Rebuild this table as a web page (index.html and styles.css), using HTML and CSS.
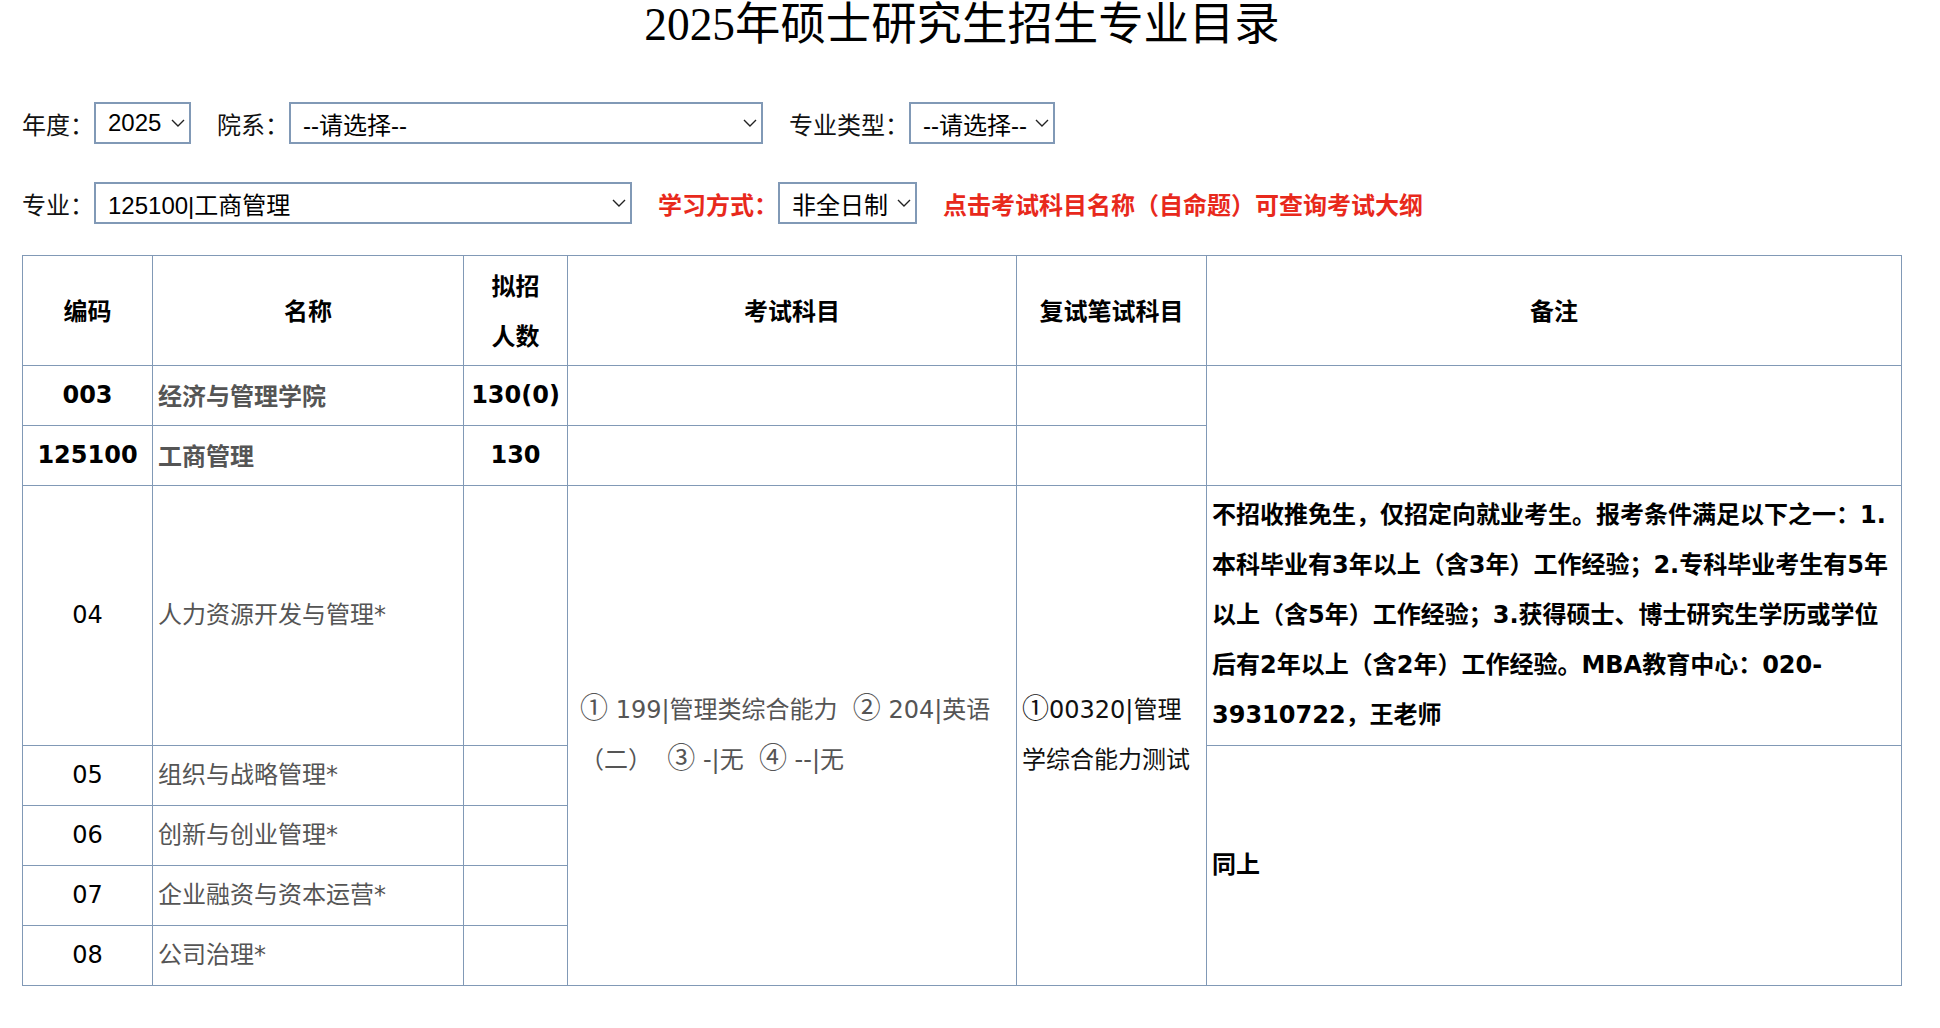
FILE: index.html
```html
<!DOCTYPE html>
<html lang="zh-CN">
<head>
<meta charset="utf-8">
<title>2025年硕士研究生招生专业目录</title>
<link rel="stylesheet" href="styles.css">
</head>
<body>
<div class="page">
  <h1 class="title">2025年硕士研究生招生专业目录</h1>

  <div class="filters">
    <div class="filter-row">
      <span class="lbl">年度：</span>
      <div class="select w-year"><span>2025</span><svg class="chev" width="14" height="8" viewBox="0 0 14 8"><polyline points="1,1 7,7 13,1"/></svg></div>
      <span class="lbl">院系：</span>
      <div class="select w-dept"><span>--请选择--</span><svg class="chev" width="14" height="8" viewBox="0 0 14 8"><polyline points="1,1 7,7 13,1"/></svg></div>
      <span class="lbl">专业类型：</span>
      <div class="select w-type"><span>--请选择--</span><svg class="chev" width="14" height="8" viewBox="0 0 14 8"><polyline points="1,1 7,7 13,1"/></svg></div>
    </div>
    <div class="filter-row">
      <span class="lbl">专业：</span>
      <div class="select w-major"><span>125100|工商管理</span><svg class="chev" width="14" height="8" viewBox="0 0 14 8"><polyline points="1,1 7,7 13,1"/></svg></div>
      <span class="lbl lbl-red">学习方式：</span>
      <div class="select w-mode"><span>非全日制</span><svg class="chev" width="14" height="8" viewBox="0 0 14 8"><polyline points="1,1 7,7 13,1"/></svg></div>
      <span class="note">点击考试科目名称（自命题）可查询考试大纲</span>
    </div>
  </div>

  <table class="catalog">
    <colgroup>
      <col class="c-code">
      <col class="c-name">
      <col class="c-num">
      <col class="c-exam">
      <col class="c-retest">
      <col class="c-remark">
    </colgroup>
    <thead>
      <tr>
        <th>编码</th>
        <th>名称</th>
        <th>拟招<br>人数</th>
        <th>考试科目</th>
        <th>复试笔试科目</th>
        <th>备注</th>
      </tr>
    </thead>
    <tbody>
      <tr>
        <td class="code-b">003</td>
        <td class="name-b">经济与管理学院</td>
        <td class="code-b">130(0)</td>
        <td></td>
        <td></td>
        <td rowspan="2"></td>
      </tr>
      <tr>
        <td class="code-b">125100</td>
        <td class="name-b">工商管理</td>
        <td class="code-b">130</td>
        <td></td>
        <td></td>
      </tr>
      <tr>
        <td class="code">04</td>
        <td class="name">人力资源开发与管理*</td>
        <td></td>
        <td rowspan="5" class="exam"><span class="circ">①</span> 199|管理类综合能力&nbsp; <span class="circ">②</span> 204|英语<br>（二）&nbsp; <span class="circ">③</span> -|无&nbsp; <span class="circ">④</span> --|无</td>
        <td rowspan="5" class="retest"><span class="circ">①</span>00320|管理<br>学综合能力测试</td>
        <td class="remark">不招收推免生，仅招定向就业考生。报考条件满足以下之一：1.<br>本科毕业有3年以上（含3年）工作经验；2.专科毕业考生有5年<br>以上（含5年）工作经验；3.获得硕士、博士研究生学历或学位<br>后有2年以上（含2年）工作经验。MBA教育中心：020-<br>39310722，王老师</td>
      </tr>
      <tr>
        <td class="code">05</td>
        <td class="name">组织与战略管理*</td>
        <td></td>
        <td rowspan="4" class="remark">同上</td>
      </tr>
      <tr>
        <td class="code">06</td>
        <td class="name">创新与创业管理*</td>
        <td></td>
      </tr>
      <tr>
        <td class="code">07</td>
        <td class="name">企业融资与资本运营*</td>
        <td></td>
      </tr>
      <tr>
        <td class="code">08</td>
        <td class="name">公司治理*</td>
        <td></td>
      </tr>
    </tbody>
  </table>
</div>
</body>
</html>
```

FILE: styles.css
```css
html, body {
  margin: 0;
  padding: 0;
  background: #ffffff;
}

body {
  font-family: "Liberation Sans", "Noto Sans CJK SC", sans-serif;
  font-size: 24px;
  color: #000;
}

.title {
  width: 1924px;
  margin: 0;
  font-family: "Liberation Serif", "Noto Sans CJK SC", serif;
  font-size: 45.4px;
  font-weight: 400;
  line-height: 50px;
  text-align: center;
  color: #000;
}

.filters {
  display: flex;
  flex-direction: column;
  gap: 38px;
  margin-top: 52px;
  padding-left: 22px;
}

.filter-row {
  display: flex;
  align-items: center;
  height: 42px;
}

.lbl {
  white-space: nowrap;
  color: #111;
}

.lbl-red {
  color: #e8291c;
  font-weight: 700;
}

.note {
  color: #e8291c;
  font-weight: 700;
  white-space: nowrap;
}

.select {
  box-sizing: border-box;
  height: 42px;
  border: 2px solid #8199b6;
  background: #fff;
  display: flex;
  align-items: center;
  justify-content: space-between;
  padding: 0 4px 0 12px;
  margin-right: 26px;
  white-space: nowrap;
  color: #000;
}

.chev {
  flex: none;
}

.chev polyline {
  fill: none;
  stroke: #222;
  stroke-width: 1.4;
}

.w-year { width: 97px; }
.w-dept { width: 474px; }
.w-type { width: 146px; }
.w-major { width: 538px; }
.w-mode { width: 139px; }

.catalog {
  margin: 31px 0 0 22px;
  width: 1879px;
  border-collapse: collapse;
  table-layout: fixed;
}

.c-code { width: 130px; }
.c-name { width: 311px; }
.c-num { width: 104px; }
.c-exam { width: 449px; }
.c-retest { width: 190px; }
.c-remark { width: 695px; }

.catalog th,
.catalog td {
  border: 1px solid #8199b6;
  padding: 4px 5px 5px;
  line-height: 50px;
  vertical-align: middle;
  font-size: 24px;
}

.catalog th {
  font-family: "Noto Sans CJK SC", sans-serif;
  font-weight: 700;
  text-align: center;
  color: #000;
}

.code-b {
  font-family: "DejaVu Sans", "Noto Sans CJK SC", sans-serif;
  font-weight: 700;
  text-align: center;
  color: #000;
}

.name-b {
  font-family: "Noto Sans CJK SC", sans-serif;
  font-weight: 700;
  color: #555;
}

.code {
  font-family: "DejaVu Sans", "Noto Sans CJK SC", sans-serif;
  text-align: center;
  color: #000;
}

.name {
  font-family: "DejaVu Sans", "Noto Sans CJK SC", sans-serif;
  color: #555;
}

.catalog .exam {
  font-family: "DejaVu Sans", "Noto Sans CJK SC", sans-serif;
  color: #555;
  padding-left: 12px;
  white-space: nowrap;
}

.retest {
  font-family: "DejaVu Sans", "Noto Sans CJK SC", sans-serif;
  color: #111;
  white-space: nowrap;
}

.circ {
  font-family: "Noto Sans CJK SC", sans-serif;
  font-size: 28px;
  line-height: 0;
}

.retest .circ {
  font-size: 27px;
}

.remark {
  font-family: "DejaVu Sans", "Noto Sans CJK SC", sans-serif;
  font-weight: 700;
  color: #000;
  white-space: nowrap;
  overflow: hidden;
}
```
